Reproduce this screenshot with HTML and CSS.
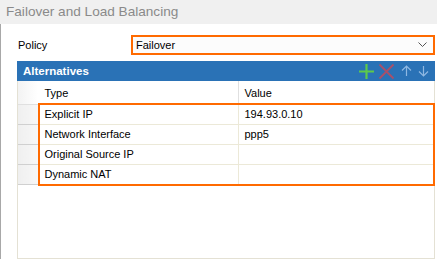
FILE: index.html
```html
<!DOCTYPE html>
<html>
<head lang="en">
	<meta charset="UTF-8">
	<title>Failover and Load Balancing</title>
	<link rel="stylesheet" href="styles.css">
</head>
<body>
	<div class="title">Failover and Load Balancing</div>

	<div class="content">
		<!-- policy selector -->
		<div class="policyRow">
			<span class="label">Policy</span>
			<div class="select">
				<span>Failover</span>
				<svg width="9" height="6" viewBox="0 0 9 6">
					<polyline points="0.5,0.5 4.5,4.5 8.5,0.5" fill="none" stroke="#555" stroke-width="1"></polyline>
				</svg>
			</div>
		</div>

		<!-- alternatives grid -->
		<div class="panel">
			<div class="panelHead">
				<span class="panelTitle">Alternatives</span>
				<div class="tools">
					<svg width="17" height="17" viewBox="0 0 17 17">
						<path d="M8.5 1 V16 M1 8.5 H16" stroke="#5dc94b" stroke-width="2.2"></path>
					</svg>
					<svg width="17" height="17" viewBox="0 0 17 17">
						<path d="M1.5 1.5 L15.5 15.5 M15.5 1.5 L1.5 15.5" stroke="#a8506a" stroke-width="1.8"></path>
					</svg>
					<svg width="11" height="12" viewBox="0 0 11 12">
						<path d="M5.5 1 V11 M1 5.5 L5.5 1 L10 5.5" fill="none" stroke="#8fb8e2" stroke-width="1.2"></path>
					</svg>
					<svg width="11" height="12" viewBox="0 0 11 12">
						<path d="M5.5 1 V11 M1 6.5 L5.5 11 L10 6.5" fill="none" stroke="#8fb8e2" stroke-width="1.2"></path>
					</svg>
				</div>
			</div>

			<div class="gridWrap">
				<table class="grid">
					<tr class="headRow">
						<td class="rowHead corner"></td>
						<td class="colType">Type</td>
						<td>Value</td>
					</tr>
					<tr>
						<td class="rowHead"></td>
						<td class="colType">Explicit IP</td>
						<td>194.93.0.10</td>
					</tr>
					<tr>
						<td class="rowHead"></td>
						<td class="colType">Network Interface</td>
						<td>ppp5</td>
					</tr>
					<tr>
						<td class="rowHead"></td>
						<td class="colType">Original Source IP</td>
						<td></td>
					</tr>
					<tr>
						<td class="rowHead"></td>
						<td class="colType">Dynamic NAT</td>
						<td></td>
					</tr>
				</table>
				<!-- orange highlight round the rows -->
				<div class="highlight"></div>
			</div>
		</div>
	</div>
</body>
</html>
```

FILE: styles.css
```css
body {
	margin: 0;
	background-color: #FFFFFF;
	font-family: "Liberation Sans", Arial, sans-serif;
	font-size: 11px;
	color: #000000;
}
.title {
	height: 24px;
	line-height: 23px;
	padding-left: 6px;
	background-color: #F0F0F0;
	color: #8A8A8A;
	font-size: 13.6px;
}
.content {
	border-left: 1px solid #A8A8A8;
	padding: 11px 2px 0 16px;
	height: 235px;
	box-sizing: border-box;
}
.policyRow {
	display: flex;
	align-items: center;
	height: 20px;
}
.label {
	width: 113px;
	padding-left: 1px;
}
.select {
	flex: 1;
	height: 20px;
	box-sizing: border-box;
	border: 2px solid #FF6A00;
	display: flex;
	align-items: center;
	justify-content: space-between;
	padding: 0 6px 0 3px;
	background: #FCFCFC;
}
.panel {
	margin-top: 6px;
	height: 198px;
	box-sizing: border-box;
	border: 1px solid #E4E1D4;
	border-top: none;
}
.panelHead {
	height: 20px;
	margin: 0 -1px;
	background-color: #2A72B6;
	display: flex;
	align-items: center;
	justify-content: space-between;
	padding: 0 6px;
}
.panelTitle {
	color: #FFFFFF;
	font-weight: bold;
	font-size: 11.5px;
}
.tools {
	display: flex;
	align-items: center;
	gap: 3px;
}
.tools svg + svg + svg {
	margin-left: 3px;
}
.gridWrap {
	position: relative;
}
.grid {
	width: 100%;
	border-collapse: collapse;
}
.grid td {
	height: 20px;
	padding: 0 0 0 6px;
	border-bottom: 1px solid #ECE9D8;
	border-right: 1px solid #ECE9D8;
	box-sizing: border-box;
}
.grid td:last-child {
	border-right: none;
}
.headRow td {
	height: 23px;
	padding-top: 1px;
	border-bottom: 1px solid #E0E0E0;
	border-right: 1px solid #E0E0E0;
}
.colType {
	width: 200px;
}
.grid td.rowHead {
	width: 20px;
	padding: 0;
	background: linear-gradient(to right, #EFEFEF, #F7F7F7);
	border-right: 1px solid #A0A0A0;
	border-bottom: 1px solid #D0D0D0;
}
.grid td.corner {
	background: linear-gradient(to right, #F3F3F3, #FFFFFF);
	border-right: 1px solid #FFFFFF;
	border-bottom: 1px solid #E0E0E0;
}
.highlight {
	position: absolute;
	left: 20px;
	right: -1px;
	top: 22px;
	height: 83px;
	border: 2px solid #FF6A00;
	box-sizing: border-box;
	pointer-events: none;
}
```
